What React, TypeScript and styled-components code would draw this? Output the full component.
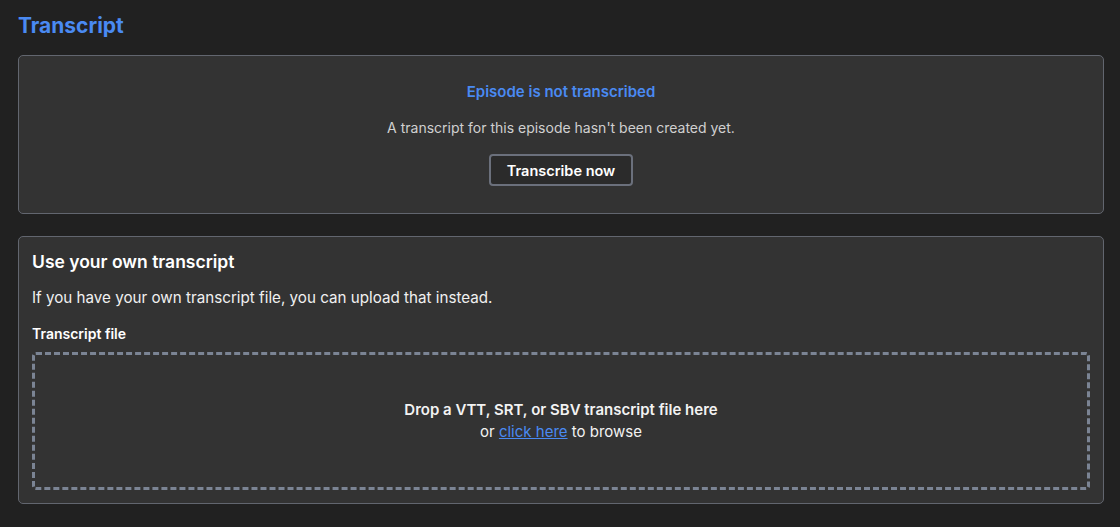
import React from "react";
import styled, { createGlobalStyle } from "styled-components";

const GlobalStyle = createGlobalStyle`
  html, body {
    margin: 0;
    background: #212121;
    color: #f2f2f2;
    font-family: Inter, "Noto Sans", "Liberation Sans", sans-serif;
  }
`;

const Page = styled.main`
  padding: 12px 16px 24px 18px;
`;

const PageTitle = styled.h1`
  margin: 0 0 15px;
  font-size: 21px;
  line-height: 28px;
  font-weight: 700;
  color: #4a8af2;
`;

const Card = styled.section<{ $centered?: boolean }>`
  background: #333333;
  border: 1px solid #62666f;
  border-radius: 5px;
  padding: ${(p) => (p.$centered ? "26px 14px 27px" : "13px 13px 13px")};
  text-align: ${(p) => (p.$centered ? "center" : "left")};
  & + & {
    margin-top: 22px;
  }
`;

const StatusTitle = styled.h2`
  margin: 0;
  font-size: 15px;
  line-height: 20px;
  font-weight: 600;
  color: #4a8af2;
`;

const StatusText = styled.p`
  margin: 16px 0 16px;
  font-size: 14px;
  line-height: 20px;
  color: #d0d0d0;
`;

const Button = styled.button`
  height: 32px;
  padding: 0 16px;
  background: #2b2b2b;
  border: 2px solid #6b707c;
  border-radius: 4px;
  color: #ffffff;
  font-family: inherit;
  font-size: 14.5px;
  font-weight: 600;
  cursor: pointer;
`;

const CardTitle = styled.h2`
  margin: 0;
  font-size: 17.5px;
  line-height: 24px;
  font-weight: 600;
  color: #ffffff;
`;

const Paragraph = styled.p`
  margin: 13px 0 0;
  font-size: 15.2px;
  line-height: 22px;
  color: #f0f0f0;
`;

const Label = styled.label`
  display: block;
  margin: 15px 0 8px;
  font-size: 14px;
  line-height: 20px;
  font-weight: 600;
  color: #ffffff;
`;

const DropZone = styled.div`
  height: 132px;
  border: 3px dashed #7b8494;
  border-radius: 4px;
  display: flex;
  flex-direction: column;
  align-items: center;
  justify-content: center;
  font-size: 15px;
  line-height: 22px;
  color: #f2f2f2;
  text-align: center;
`;

const DropMain = styled.div`
  font-weight: 600;
`;

const Link = styled.a`
  color: #4a8af2;
  text-decoration: underline;
  cursor: pointer;
`;

export default function App() {
  return (
    <>
      <GlobalStyle />
      <Page>
        <PageTitle>Transcript</PageTitle>
        <Card $centered>
          <StatusTitle>Episode is not transcribed</StatusTitle>
          <StatusText>A transcript for this episode hasn't been created yet.</StatusText>
          <Button>Transcribe now</Button>
        </Card>
        <Card>
          <CardTitle>Use your own transcript</CardTitle>
          <Paragraph>If you have your own transcript file, you can upload that instead.</Paragraph>
          <Label>Transcript file</Label>
          <DropZone>
            <DropMain>Drop a VTT, SRT, or SBV transcript file here</DropMain>
            <div>
              or <Link>click here</Link> to browse
            </div>
          </DropZone>
        </Card>
      </Page>
    </>
  );
}
